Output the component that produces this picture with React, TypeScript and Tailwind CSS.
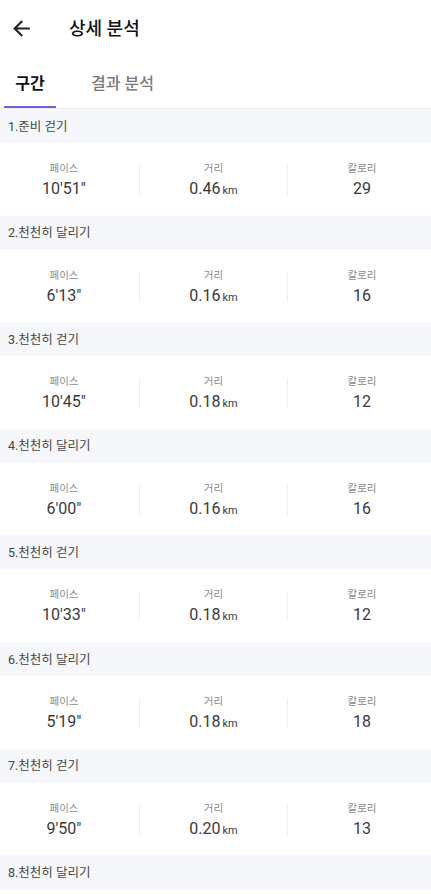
import React from "react";

const rows = [
  { t: "1.준비 걷기", pace: "10'51\"", dist: "0.46", cal: "29" },
  { t: "2.천천히 달리기", pace: "6'13\"", dist: "0.16", cal: "16" },
  { t: "3.천천히 걷기", pace: "10'45\"", dist: "0.18", cal: "12" },
  { t: "4.천천히 달리기", pace: "6'00\"", dist: "0.16", cal: "16" },
  { t: "5.천천히 걷기", pace: "10'33\"", dist: "0.18", cal: "12" },
  { t: "6.천천히 달리기", pace: "5'19\"", dist: "0.18", cal: "18" },
  { t: "7.천천히 걷기", pace: "9'50\"", dist: "0.20", cal: "13" },
  { t: "8.천천히 달리기", pace: "", dist: "", cal: "" },
];

function Stat({ label, children, cls }: { label: string; children: React.ReactNode; cls: string }) {
  return (
    <div className={`flex flex-col items-center pt-[19px] ${cls}`}>
      <div className="text-[10.5px] leading-[14px] text-[#8a8a8a]">{label}</div>
      <div className="mt-[3px] text-[16px] font-normal leading-[20px] text-[#3a3a3a]">{children}</div>
    </div>
  );
}

export default function App() {
  return (
    <div
      className="w-[431px] h-[894px] overflow-hidden bg-white"
      style={{ fontFamily: 'Roboto, "Noto Sans CJK KR", sans-serif' }}
    >
      <div className="h-[56px] flex items-center">
        <div className="w-[69px] pl-[9px] flex items-center">
          <svg width="25" height="25" viewBox="0 0 24 24" className="text-[#222]">
            <path
              d="M20 11H7.83l5.59-5.59L12 4l-8 8 8 8 1.41-1.41L7.83 13H20v-2z"
              fill="currentColor"
            />
          </svg>
        </div>
        <div className="text-[18px] font-medium text-[#111] leading-none mt-[1px]">상세 분석</div>
      </div>
      <div className="h-[53px] flex items-end border-b border-[#ececec]">
        <div className="w-[52px] ml-[4px] flex flex-col items-center">
          <div className="text-[16px] font-bold text-[#111] leading-[20px] mb-[12px]">구간</div>
          <div className="w-full h-[2px] bg-[#7a5fd8]" />
        </div>
        <div className="ml-[35px] flex flex-col items-center">
          <div className="text-[16px] font-medium text-[#7a7a7a] leading-[20px] mb-[14px]">결과 분석</div>
        </div>
      </div>
      {rows.map((r, i) => (
        <div key={i}>
          <div className="h-[34px] bg-[#f6f7fa] flex items-center pl-[8px] pt-[2px] text-[12.5px] text-[#444]">
            {r.t}
          </div>
          {r.pace && (
            <div className="h-[72.6px] flex items-start">
              <Stat label="페이스" cls="w-[139px] pr-[11px]">{r.pace}</Stat>
              <div className="w-px h-[30px] bg-[#eeeeee] mt-[22px]" />
              <Stat label="거리" cls="w-[147px]">
                <span>{r.dist}</span>
                <span className="text-[11px] ml-[2px]">km</span>
              </Stat>
              <div className="w-px h-[30px] bg-[#eeeeee] mt-[22px]" />
              <Stat label="칼로리" cls="flex-1 pl-[5px]">{r.cal}</Stat>
            </div>
          )}
        </div>
      ))}
    </div>
  );
}
